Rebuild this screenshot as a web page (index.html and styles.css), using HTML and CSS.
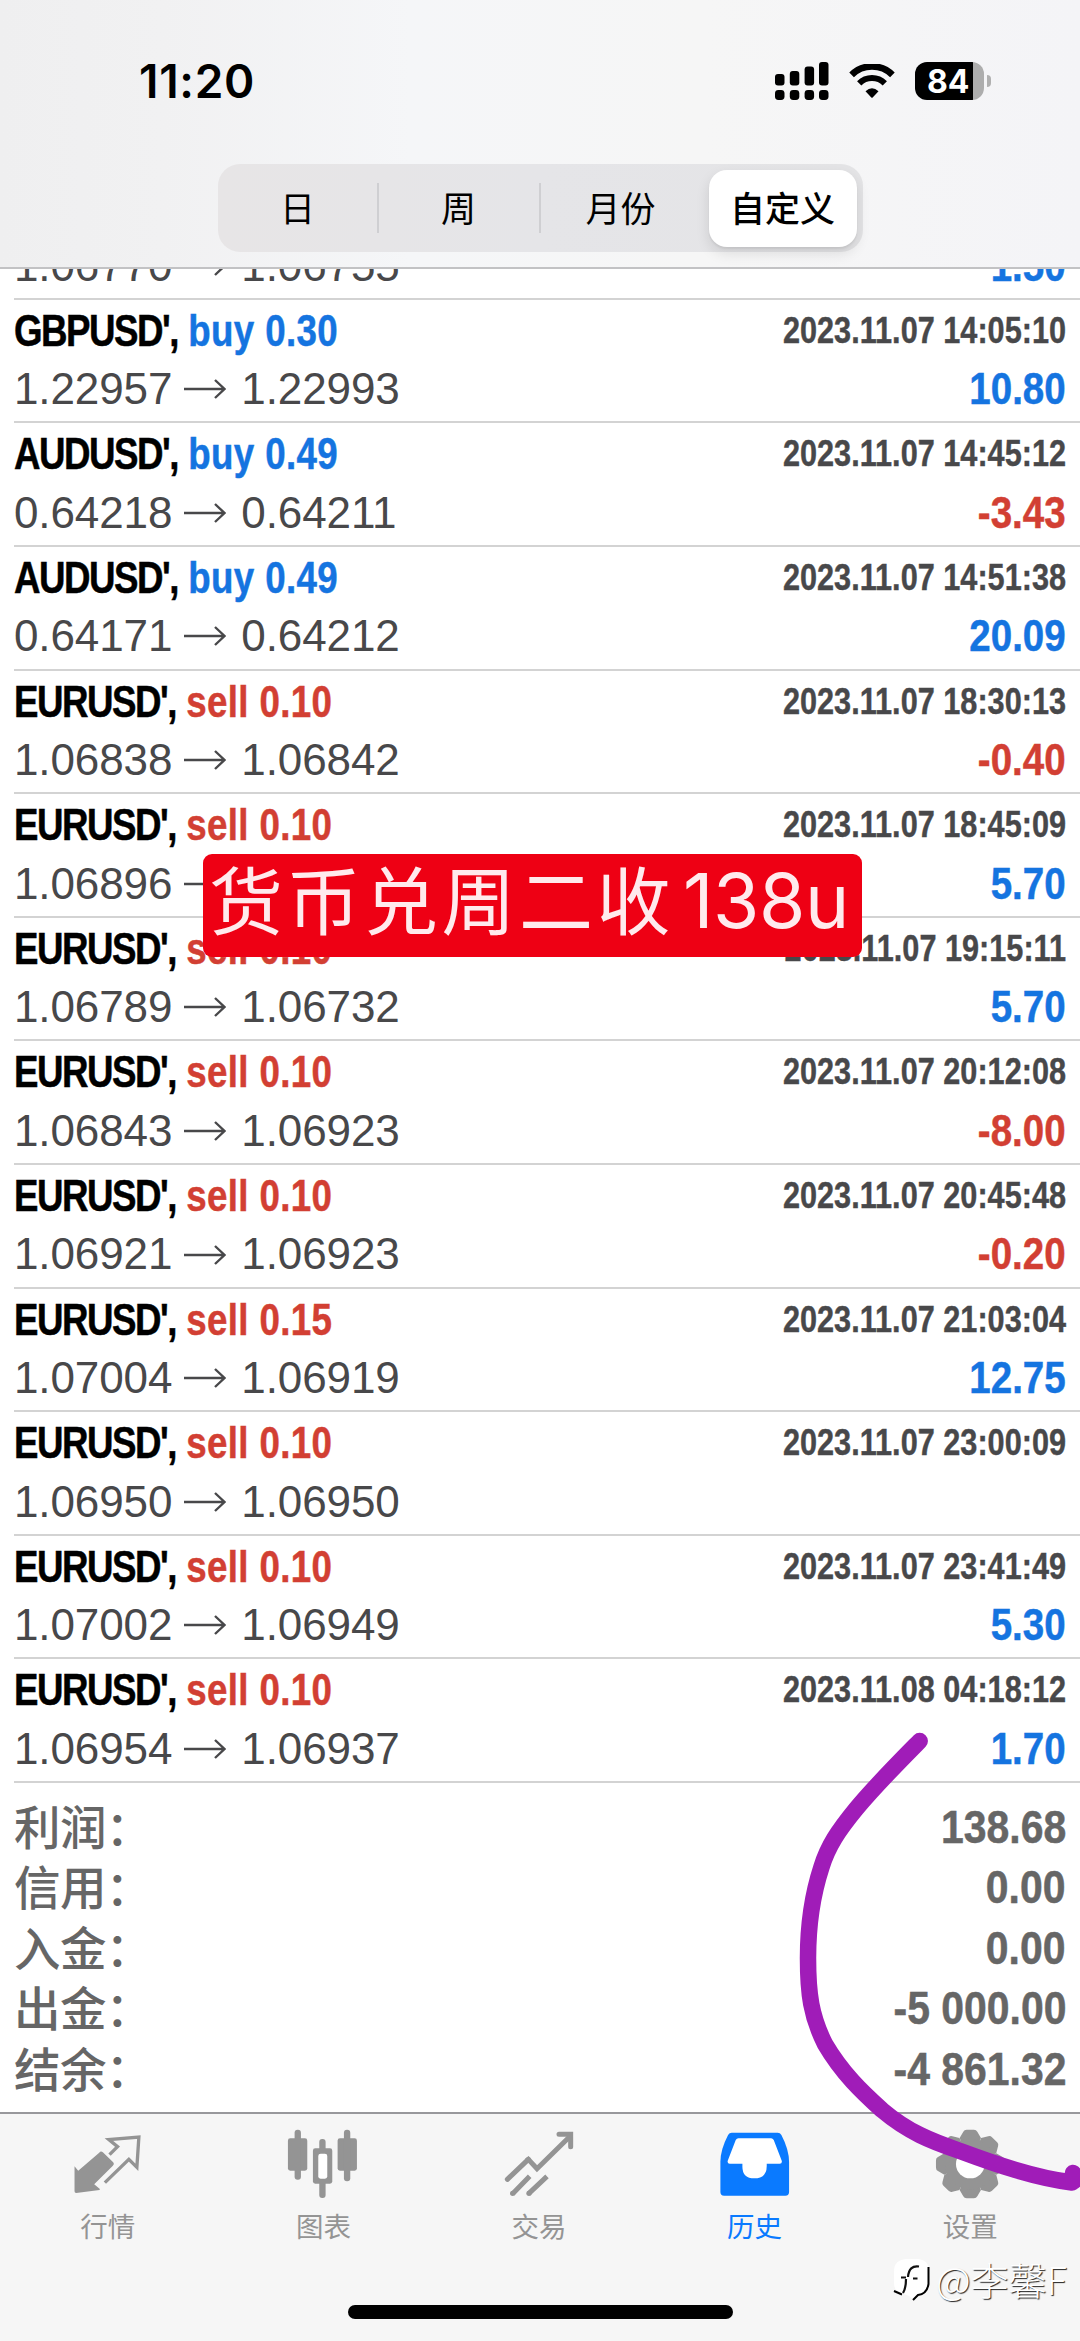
FILE: index.html
```html
<!DOCTYPE html>
<html lang="zh-CN">
<head>
<meta charset="utf-8">
<title>历史</title>
<link rel="stylesheet" href="styles.css">
</head>
<body>
<svg width="0" height="0" class="defs">
  <symbol id="arrow" viewBox="0 0 42 22"><path d="M0 11H40M31 2L40.5 11L31 20" fill="none" stroke="currentColor" stroke-width="2.4"/></symbol>
  <symbol id="tooth" viewBox="-110 -110 220 220"><path d="M-32 -78L-21 -97Q-18 -103 -11 -103H11Q18 -103 21 -97L32 -78L0 0Z"/></symbol>
</svg>
<div class="screen">
  <header class="header">
    <div class="status">
      <span class="time">11:20</span>
      <div class="indicators">
        <svg class="signal" viewBox="0 0 54 38" width="54" height="38">
          <rect x="0" y="12" width="9.5" height="11.5" rx="3"/><rect x="14.8" y="9" width="9.5" height="14.5" rx="3"/><rect x="29.6" y="4.5" width="9.5" height="19" rx="3"/><rect x="44" y="0" width="9.5" height="23.5" rx="3"/>
          <rect x="0" y="28" width="9.5" height="10" rx="3.4"/><rect x="14.8" y="28" width="9.5" height="10" rx="3.4"/><rect x="29.6" y="28" width="9.5" height="10" rx="3.4"/><rect x="44" y="28" width="9.5" height="10" rx="3.4"/>
        </svg>
        <svg class="wifi" viewBox="0 0 46 34" width="46" height="34">
          <path d="M2.600 10.800A29 29 0 0 1 43.400 10.800" fill="none" stroke="#000" stroke-width="6.600"/>
          <path d="M10.200 19.300A18 18 0 0 1 35.800 19.300" fill="none" stroke="#000" stroke-width="6"/>
          <path d="M16.500 27.200Q23 21.200 29.500 27.200L23.700 33.400Q23 34 22.300 33.400Z"/>
        </svg>
        <div class="battery"><div class="cell">84</div><i class="nub"></i></div>
      </div>
    </div>
    <nav class="segments">
      <span class="seg">日</span>
      <span class="seg divided">周</span>
      <span class="seg divided">月份</span>
      <span class="seg selected">自定义</span>
    </nav>
  </header>

  <main class="list">
    <div class="row clipped"><div class="line prices"><span class="pair">1.06770<svg class="arrow"><use href="#arrow"/></svg>1.06755</span><b class="profit up">1.50</b></div></div>
    <div class="row"><div class="line"><span class="title"><b>GBPUSD',</b> <em class="up">buy 0.30</em></span><b class="date">2023.11.07 14:05:10</b></div><div class="line prices"><span class="pair">1.22957<svg class="arrow"><use href="#arrow"/></svg>1.22993</span><b class="profit up">10.80</b></div></div>
    <div class="row"><div class="line"><span class="title"><b>AUDUSD',</b> <em class="up">buy 0.49</em></span><b class="date">2023.11.07 14:45:12</b></div><div class="line prices"><span class="pair">0.64218<svg class="arrow"><use href="#arrow"/></svg>0.64211</span><b class="profit down">-3.43</b></div></div>
    <div class="row"><div class="line"><span class="title"><b>AUDUSD',</b> <em class="up">buy 0.49</em></span><b class="date">2023.11.07 14:51:38</b></div><div class="line prices"><span class="pair">0.64171<svg class="arrow"><use href="#arrow"/></svg>0.64212</span><b class="profit up">20.09</b></div></div>
    <div class="row"><div class="line"><span class="title"><b>EURUSD',</b> <em class="down">sell 0.10</em></span><b class="date">2023.11.07 18:30:13</b></div><div class="line prices"><span class="pair">1.06838<svg class="arrow"><use href="#arrow"/></svg>1.06842</span><b class="profit down">-0.40</b></div></div>
    <div class="row"><div class="line"><span class="title"><b>EURUSD',</b> <em class="down">sell 0.10</em></span><b class="date">2023.11.07 18:45:09</b></div><div class="line prices"><span class="pair">1.06896<svg class="arrow"><use href="#arrow"/></svg></span><b class="profit up">5.70</b></div></div>
    <div class="row"><div class="line"><span class="title"><b>EURUSD',</b> <em class="down">sell 0.10</em></span><b class="date">2023.11.07 19:15:11</b></div><div class="line prices"><span class="pair">1.06789<svg class="arrow"><use href="#arrow"/></svg>1.06732</span><b class="profit up">5.70</b></div></div>
    <div class="row"><div class="line"><span class="title"><b>EURUSD',</b> <em class="down">sell 0.10</em></span><b class="date">2023.11.07 20:12:08</b></div><div class="line prices"><span class="pair">1.06843<svg class="arrow"><use href="#arrow"/></svg>1.06923</span><b class="profit down">-8.00</b></div></div>
    <div class="row"><div class="line"><span class="title"><b>EURUSD',</b> <em class="down">sell 0.10</em></span><b class="date">2023.11.07 20:45:48</b></div><div class="line prices"><span class="pair">1.06921<svg class="arrow"><use href="#arrow"/></svg>1.06923</span><b class="profit down">-0.20</b></div></div>
    <div class="row"><div class="line"><span class="title"><b>EURUSD',</b> <em class="down">sell 0.15</em></span><b class="date">2023.11.07 21:03:04</b></div><div class="line prices"><span class="pair">1.07004<svg class="arrow"><use href="#arrow"/></svg>1.06919</span><b class="profit up">12.75</b></div></div>
    <div class="row"><div class="line"><span class="title"><b>EURUSD',</b> <em class="down">sell 0.10</em></span><b class="date">2023.11.07 23:00:09</b></div><div class="line prices"><span class="pair">1.06950<svg class="arrow"><use href="#arrow"/></svg>1.06950</span></div></div>
    <div class="row"><div class="line"><span class="title"><b>EURUSD',</b> <em class="down">sell 0.10</em></span><b class="date">2023.11.07 23:41:49</b></div><div class="line prices"><span class="pair">1.07002<svg class="arrow"><use href="#arrow"/></svg>1.06949</span><b class="profit up">5.30</b></div></div>
    <div class="row"><div class="line"><span class="title"><b>EURUSD',</b> <em class="down">sell 0.10</em></span><b class="date">2023.11.08 04:18:12</b></div><div class="line prices"><span class="pair">1.06954<svg class="arrow"><use href="#arrow"/></svg>1.06937</span><b class="profit up">1.70</b></div></div>
    <div class="summary">
      <div><span>利润：</span><b>138.68</b></div>
      <div><span>信用：</span><b>0.00</b></div>
      <div><span>入金：</span><b>0.00</b></div>
      <div><span>出金：</span><b>-5 000.00</b></div>
      <div><span>结余：</span><b>-4 861.32</b></div>
    </div>
  </main>

  <footer class="footer">
    <nav class="tabs">
      <a class="tab"><svg viewBox="35.4 55 216 216"><path fill="currentColor" d="M43 170L54 183L117 129Q122 123 128 128L159 158Q164 163 158 168L102 224L119 238L118 241L48 250Q43 250 43 245Z"/><path d="M148 135L172 111L146 90L236 82L230 173L206 149L134 219" fill="none" stroke="currentColor" stroke-width="10"/></svg>行情</a>
      <a class="tab"><svg viewBox="682.2 55 216 216"><g fill="currentColor"><rect x="685" y="86" width="58" height="97" rx="7"/><rect x="705" y="60" width="19" height="150" rx="9"/><rect x="834" y="86" width="58" height="97" rx="7"/><rect x="853" y="60" width="19" height="155" rx="9"/><rect x="760" y="116" width="58" height="106" rx="7"/><rect x="779" y="88" width="19" height="177" rx="9"/></g><rect x="776" y="132" width="27" height="75" rx="7" fill="#fff"/></svg>图表</a>
      <a class="tab"><svg viewBox="69 55 216 216"><g fill="none" stroke="currentColor" stroke-width="15"><path stroke-linecap="round" d="M82 209L145 149"/><path d="M140 153L145 149L171 177L268 82"/><path stroke-linecap="round" d="M237 74H272V111"/><path d="M98 252L149 200M146 252L201 200"/></g><circle cx="98" cy="251" r="8" fill="currentColor"/><circle cx="147" cy="251" r="8" fill="currentColor"/></svg>交易</a>
      <a class="tab active"><svg viewBox="715.8 55 216 216"><path fill="currentColor" d="M754 69H892Q899 69 903 76Q926 120 926 157V247Q926 258 915 258H731Q720 258 720 247V157Q720 120 743 76Q747 69 754 69Z"/><path fill="#fff" d="M774 86H872Q877 86 880 91L904 153Q906 162 898 162H859V169Q859 206 822 206T786 169V162H748Q740 162 742 153L766 91Q769 86 774 86Z"/></svg>历史</a>
      <a class="tab"><svg viewBox="132.6 55 216 216"><g transform="translate(241.5 163)" fill="currentColor"><path d="M-32 -78L-21 -97Q-18 -103 -11 -103H11Q18 -103 21 -97L32 -78L0 0Z"/><path d="M-32 -78L-21 -97Q-18 -103 -11 -103H11Q18 -103 21 -97L32 -78L0 0Z" transform="rotate(45)"/><path d="M-32 -78L-21 -97Q-18 -103 -11 -103H11Q18 -103 21 -97L32 -78L0 0Z" transform="rotate(90)"/><path d="M-32 -78L-21 -97Q-18 -103 -11 -103H11Q18 -103 21 -97L32 -78L0 0Z" transform="rotate(135)"/><path d="M-32 -78L-21 -97Q-18 -103 -11 -103H11Q18 -103 21 -97L32 -78L0 0Z" transform="rotate(180)"/><path d="M-32 -78L-21 -97Q-18 -103 -11 -103H11Q18 -103 21 -97L32 -78L0 0Z" transform="rotate(225)"/><path d="M-32 -78L-21 -97Q-18 -103 -11 -103H11Q18 -103 21 -97L32 -78L0 0Z" transform="rotate(270)"/><path d="M-32 -78L-21 -97Q-18 -103 -11 -103H11Q18 -103 21 -97L32 -78L0 0Z" transform="rotate(315)"/><circle r="76"/><circle r="43" fill="#fff"/></g></svg>设置</a>
    </nav>
    <div class="home"></div>
  </footer>

  <div class="caption"><span>货币兑周二收</span><span class="latin">138u</span></div>

  <svg class="stroke" viewBox="790 1720 290 480" width="290" height="480">
    <path d="M919.7 1741C897 1764 875 1786 856 1809C838 1831 828 1846 821.5 1867C812 1896 808 1927 808 1958C808 1994 811 2016 825 2044C842 2073 862 2092 882 2110C908 2132 931 2141 960 2151C995 2164 1035 2178 1072 2182.500M1073 2173L1074 2181" fill="none" stroke="#a01cb8" stroke-width="16.500" stroke-linecap="round" stroke-linejoin="round"/>
  </svg>

  <div class="watermark">
    <svg viewBox="0 0 40 46" width="40" height="46"><path d="M13 2H25Q36 3 36 14V26Q36 35 26 38L20 43Q17 38 10 37Q1 35 1 26V14Q1 3 13 2Z" fill="#fff"/><path d="M35.500 10V27Q34 37 25 38L20 43M1 34L9 37.500" fill="none" stroke="#000" stroke-width="2"/><path d="M26 9.500Q16 8 15 20M13 20.500H8M13 22Q13 31 10 36M20 21.500H24.500" fill="none" stroke="#111" stroke-width="2.200"/></svg>
    <span>@李馨F</span>
  </div>
</div>
</body>
</html>
```
FILE: styles.css
```css
* { box-sizing: border-box; }
body { margin: 0; background: #fff; font-family: "Noto Sans CJK SC", sans-serif; }
.defs { position: absolute; }
.screen { position: relative; width: 1080px; height: 2341px; overflow: hidden; display: flex; flex-direction: column; background: #fff; }

.header { height: 269px; flex: none; display: flex; flex-direction: column; align-items: center; border-bottom: 2px solid #c2c2c4; background: linear-gradient(90deg, #efeff0 0, #f1f1f2 15%, #f5f6f8 38%, #f6f6f6 65%, #f4f4f7 100%); }
.status { width: 100%; height: 164px; padding: 3px 89px 0 139px; display: flex; justify-content: space-between; align-items: center; }
.time { font: 600 46px/60px Inter, sans-serif; letter-spacing: .7px; padding-bottom: 5px; }
.indicators { display: flex; align-items: center; height: 38px; margin-bottom: 6px; }
.wifi { margin-left: 20.500px; }
.battery { display: flex; align-items: center; margin-left: 20px; gap: 3px; }
.cell { width: 69px; height: 38px; border-radius: 12px; background: linear-gradient(90deg, #000 58px, #adadad 58px); color: #fff; font: 700 32px/39px Inter, sans-serif; padding-left: 12px; }
.nub { width: 4px; height: 12px; border-radius: 0 4px 4px 0; background: #b0b0b0; }

.segments { width: 645px; height: 88px; border-radius: 22px; background: linear-gradient(90deg, #e7e5e6, #e5e5e8 50%, #e4e4e6); padding: 5px; display: flex; align-items: center; font-size: 35px; line-height: 48px; color: #000; }
.seg { flex: 0 0 162px; text-align: center; padding-bottom: 2px; }
.seg:first-child { flex-basis: 154px; padding-right: 4px; }
.seg.divided { border-left: 2px solid #cfcfd2; }
.seg.selected { flex: 0 0 148px; margin-left: 8px; height: 77px; line-height: 74px; border-radius: 18px; background: #fff; font-weight: 500; box-shadow: 0 6px 14px rgba(0, 0, 0, .11), 0 2px 2px rgba(0, 0, 0, .06); }

.list { flex: none; height: 1843px; overflow: hidden; font-family: "Liberation Sans", sans-serif; }
.row { height: 123.620px; margin-left: 14px; padding: 2px 14px 0 0; border-bottom: 2px solid #d3d3d3; }
.row.clipped { height: 30.700px; padding-top: 0; overflow: hidden; display: flex; flex-direction: column; justify-content: flex-end; }
.row.clipped .line { flex: none; margin-bottom: 2px; }
.line { height: 58.400px; line-height: 58.400px; display: flex; justify-content: space-between; white-space: nowrap; }
.title { font-size: 45px; transform: scaleX(.815); transform-origin: 0 50%; -webkit-text-stroke: .5px currentColor; }
.title b { letter-spacing: -1.800px; }
.title em { font-style: normal; font-weight: 700; letter-spacing: .45px; }
.up { color: #1574e0; }
.down { color: #d23f33; }
.date { font-size: 36.300px; color: #48484a; transform: scaleX(.845); transform-origin: 100% 50%; -webkit-text-stroke: .4px currentColor; }
.pair { font-size: 44px; color: #48484a; display: flex; align-items: center; letter-spacing: -.1px; }
.arrow { width: 42px; height: 22px; margin: 0 15px 0 12px; }
.profit { font-size: 45px; transform: scaleX(.855); transform-origin: 100% 50%; -webkit-text-stroke: .5px currentColor; }

.summary { padding: 14px 14px 0 14px; color: #666; }
.summary div { height: 60.400px; display: flex; justify-content: space-between; line-height: 60.400px; }
.summary span { font: 500 46.500px/56px "Noto Sans CJK SC", sans-serif; letter-spacing: -.6px; }
.summary b { font-size: 46.500px; transform: scaleX(.88); transform-origin: 100% 50%; -webkit-text-stroke: .5px currentColor; }

.footer { flex: 1; border-top: 2px solid #98989c; background: #f6f6f6; display: flex; flex-direction: column; align-items: center; }
.tabs { width: 100%; padding: 14px 2px 0 0; display: flex; }
.tab { flex: 1; display: flex; flex-direction: column; align-items: center; color: #949494; font-size: 27.500px; line-height: 36px; gap: 7px; }
.tab svg { width: 72px; height: 72px; }
.tab.active { color: #0a7aff; }
.home { width: 385px; height: 14px; border-radius: 7px; background: #000; margin-top: 62px; }

.caption { position: absolute; left: 203px; top: 854px; width: 659px; height: 103px; border-radius: 9px; background: #ee0014; color: #ffeaed; display: flex; padding-left: 6px; font-size: 74px; line-height: 86px; white-space: nowrap; }
.caption span { letter-spacing: 3.500px; }
.caption .latin { letter-spacing: -.4px; font-family: Inter, sans-serif; font-size: 75px; line-height: 94px; margin-left: 9px; }
.stroke { position: absolute; left: 790px; top: 1720px; }
.watermark { position: absolute; left: 893px; top: 2257px; display: flex; align-items: flex-start; color: #fff; font-size: 38px; line-height: 44px; text-shadow: 1px 1px 1px #222; white-space: nowrap; }
.watermark span { font-weight: 300; margin-left: 3px; }
```
